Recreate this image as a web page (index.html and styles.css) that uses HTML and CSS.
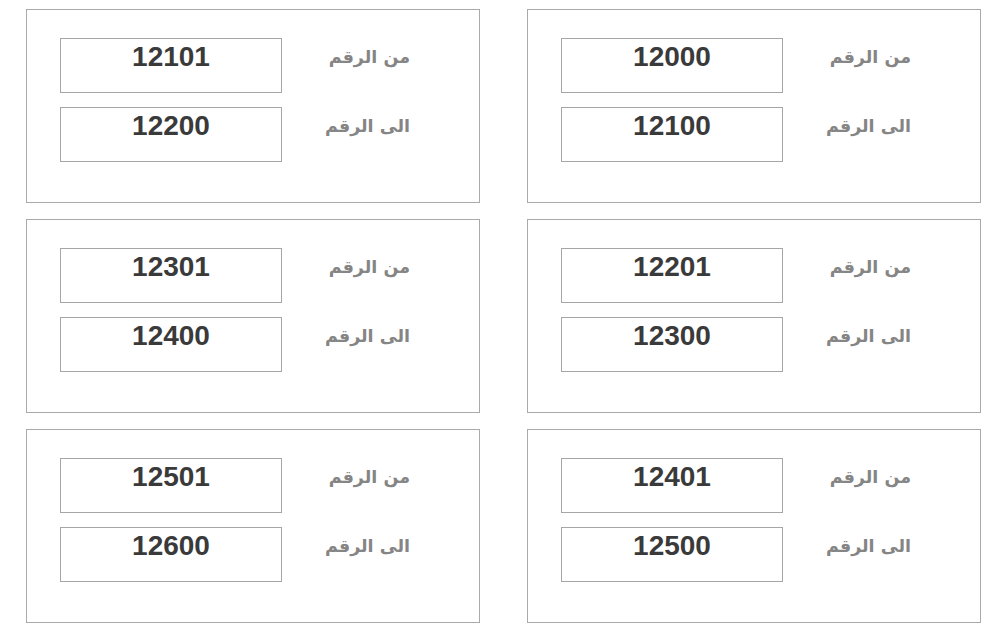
FILE: index.html
```html
<!DOCTYPE html>
<html lang="ar">
<head>
<meta charset="utf-8">
<link rel="stylesheet" href="styles.css">
</head>
<body>
<div class="grid">
  <div class="card">
    <div class="row"><div class="label">من الرقم</div><div class="box">12000</div></div>
    <div class="row"><div class="label">الى الرقم</div><div class="box">12100</div></div>
  </div>
  <div class="card">
    <div class="row"><div class="label">من الرقم</div><div class="box">12101</div></div>
    <div class="row"><div class="label">الى الرقم</div><div class="box">12200</div></div>
  </div>
  <div class="card">
    <div class="row"><div class="label">من الرقم</div><div class="box">12201</div></div>
    <div class="row"><div class="label">الى الرقم</div><div class="box">12300</div></div>
  </div>
  <div class="card">
    <div class="row"><div class="label">من الرقم</div><div class="box">12301</div></div>
    <div class="row"><div class="label">الى الرقم</div><div class="box">12400</div></div>
  </div>
  <div class="card">
    <div class="row"><div class="label">من الرقم</div><div class="box">12401</div></div>
    <div class="row"><div class="label">الى الرقم</div><div class="box">12500</div></div>
  </div>
  <div class="card">
    <div class="row"><div class="label">من الرقم</div><div class="box">12501</div></div>
    <div class="row"><div class="label">الى الرقم</div><div class="box">12600</div></div>
  </div>
</div>
</body>
</html>
```
FILE: styles.css
```css
html, body {
  margin: 0;
  padding: 0;
  background: #fff;
}
body {
  padding: 9px 0 0 26px;
  font-family: "Liberation Sans", "DejaVu Sans", sans-serif;
}
.grid {
  direction: rtl;
  display: grid;
  grid-template-columns: 454px 454px;
  column-gap: 47px;
  row-gap: 16px;
  width: 955px;
}
.card {
  box-sizing: border-box;
  height: 194px;
  border: 1px solid #aaaaaa;
  padding: 28px 69px 0 33px;
  display: flex;
  flex-direction: column;
  gap: 14px;
}
.row {
  display: flex;
  flex-direction: row;
  align-items: flex-start;
}
.label {
  width: 128px;
  flex: none;
  box-sizing: border-box;
  padding-top: 5px;
  font-family: "DejaVu Sans", sans-serif;
  font-weight: bold;
  font-size: 17.5px;
  line-height: 28px;
  color: #858585;
  text-align: right;
}
.box {
  box-sizing: border-box;
  width: 222px;
  height: 55px;
  border: 1px solid #a6a6a6;
  direction: ltr;
  text-align: center;
  font-family: "Liberation Sans", Arial, sans-serif;
  font-weight: bold;
  font-size: 28px;
  line-height: 32px;
  padding-top: 2px;
  color: #3a3a3a;
}
```
